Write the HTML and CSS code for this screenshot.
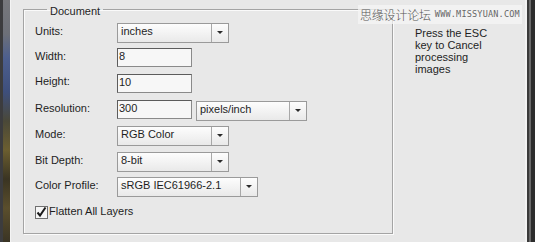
FILE: index.html
```html
<!DOCTYPE html>
<html lang="en">

<head>
    <meta charset="UTF-8">
    <title>New Document</title>
    <link rel="stylesheet" href="styles.css">
</head>

<body>

    <div class="dialog">
        <!-- photo behind the dialog -->
        <div class="photo"></div>

        <fieldset class="group">
            <legend>Document</legend>
            <div class="form">
                <span class="label">Units:</span>
                <div class="select w112"><span class="value">inches</span><span class="drop"></span></div>

                <span class="label">Width:</span>
                <div class="field"><span class="text">8</span></div>

                <span class="label">Height:</span>
                <div class="field"><span class="text">10</span></div>

                <span class="label">Resolution:</span>
                <div class="pair">
                    <div class="field"><span class="text">300</span></div>
                    <div class="select w111"><span class="value">pixels/inch</span><span class="drop"></span></div>
                </div>

                <span class="label">Mode:</span>
                <div class="select w112"><span class="value">RGB Color</span><span class="drop"></span></div>

                <span class="label">Bit Depth:</span>
                <div class="select w112"><span class="value">8-bit</span><span class="drop"></span></div>

                <span class="label">Color Profile:</span>
                <div class="select w141"><span class="value">sRGB IEC61966-2.1</span><span class="drop"></span></div>

                <div class="check-row">
                    <span class="check">
                        <svg width="13" height="13" viewBox="0 0 13 13">
                            <path d="M2.5 6.5 L5 9.5 L10.5 1.5" fill="none" stroke="#1a1a1a" stroke-width="2"/>
                        </svg>
                    </span>
                    <span class="label">Flatten All Layers</span>
                </div>
            </div>
        </fieldset>

        <div class="note">Press the ESC<br>key to Cancel<br>processing<br>images</div>

        <div class="edge"></div>

        <!-- site watermark over the top edge -->
        <div class="watermark"><span class="cn">思缘设计论坛</span><span class="url">WWW.MISSYUAN.COM</span></div>
    </div>

</body>

</html>
```

FILE: styles.css
```css
body {
    margin: 0;
    background-color: #e8e8e8;
    font-family: "Liberation Sans", Arial, sans-serif;
    font-size: 11px;
    color: #1e1e1e;
}
.dialog {
    position: relative;
    display: flex;
    width: 535px;
    height: 242px;
    overflow: hidden;
    background-color: #e8e8e8;
}
.photo {
    width: 10px;
    flex: none;
    border-left: 3px solid #3c3c3e;
    box-sizing: border-box;
    background: linear-gradient(#77787c 0, #6d7078 14%, #4d5f8e 24%, #3e4f7c 38%, #4a4838 50%, #6b5e30 62%, #3a3422 74%, #5a4e2c 86%, #3a3424 100%);
    box-shadow: 1px 0 0 #f4f4f4;
}
.group {
    flex: none;
    box-sizing: border-box;
    width: 370px;
    height: 234px;
    margin: 0 0 0 13px;
    padding: 2px 0 0 11px;
    border: 1px solid #a4a4a4;
    box-shadow: 1px 1px 0 #fafafa, inset 1px 1px 0 #fafafa;
}
.group legend {
    margin-left: 12px;
    padding: 5px 3px 0;
    line-height: 13px;
    font-size: 11px;
}
.form {
    display: grid;
    grid-template-columns: 82px auto;
    grid-template-rows: 25px 25px 26px 27px 26px 25px 26px 25px;
    align-items: center;
    justify-items: start;
}
.label {
    padding-bottom: 3px;
    line-height: 13px;
}
.select {
    display: flex;
    box-sizing: border-box;
    height: 20px;
    border: 1px solid #9a9a9a;
    background: linear-gradient(#fdfdfd, #e9e9e9);
}
.w112 {
    width: 112px;
}
.w111 {
    width: 111px;
}
.w141 {
    width: 141px;
}
.select .value {
    flex: 1;
    padding-left: 3px;
    line-height: 15px;
    white-space: nowrap;
}
.select .drop {
    position: relative;
    width: 16px;
    border-left: 1px solid #a8a8a8;
}
.select .drop::after {
    content: "";
    position: absolute;
    left: 5px;
    top: 7px;
    border-left: 3px solid transparent;
    border-right: 3px solid transparent;
    border-top: 3px solid #2a2a2a;
}
.field {
    box-sizing: border-box;
    width: 75px;
    height: 19px;
    border: 1px solid #5c5c5c;
    border-right-color: #8a8a8a;
    border-bottom-color: #8a8a8a;
    background-color: #f7f7f7;
}
.field .text {
    display: block;
    padding-left: 1px;
    line-height: 15px;
}
.pair {
    display: flex;
    align-items: center;
    gap: 4px;
}
.pair .select {
    margin-top: 2px;
}
.check-row {
    grid-column: 1 / 3;
    display: flex;
    align-items: center;
    gap: 1px;
}
.check {
    display: block;
    box-sizing: border-box;
    width: 13px;
    height: 13px;
    border: 1px solid #707070;
    background-color: #f6f6f6;
}
.check svg {
    display: block;
    margin: -1px 0 0 -1px;
}
.check-row .label {
    padding-bottom: 2px;
}
.note {
    margin: 27px 0 0 22px;
    line-height: 12px;
    color: #1e1e1e;
}
.edge {
    margin-left: auto;
    width: 10px;
    flex: none;
    background: linear-gradient(90deg, #f2f2f2 0, #f2f2f2 2px, #3a3a3a 2px, #3a3a3a 4px, #6a6a6a 4px, #6a6a6a 6px, #2c2c2c 6px);
}
.watermark {
    position: absolute;
    top: 5px;
    left: 358px;
    display: flex;
    align-items: center;
    gap: 4px;
    height: 19px;
    padding: 0 2px;
    background-color: rgba(246, 246, 246, 0.75);
    color: #555;
}
.watermark .cn {
    font-family: "Noto Sans CJK SC", sans-serif;
    font-size: 12px;
    font-weight: 300;
    line-height: 19px;
    letter-spacing: -0.2px;
}
.watermark .url {
    font-family: "DejaVu Sans Mono", monospace;
    font-size: 8.5px;
    line-height: 19px;
    letter-spacing: 0.2px;
    color: #666;
}
```
